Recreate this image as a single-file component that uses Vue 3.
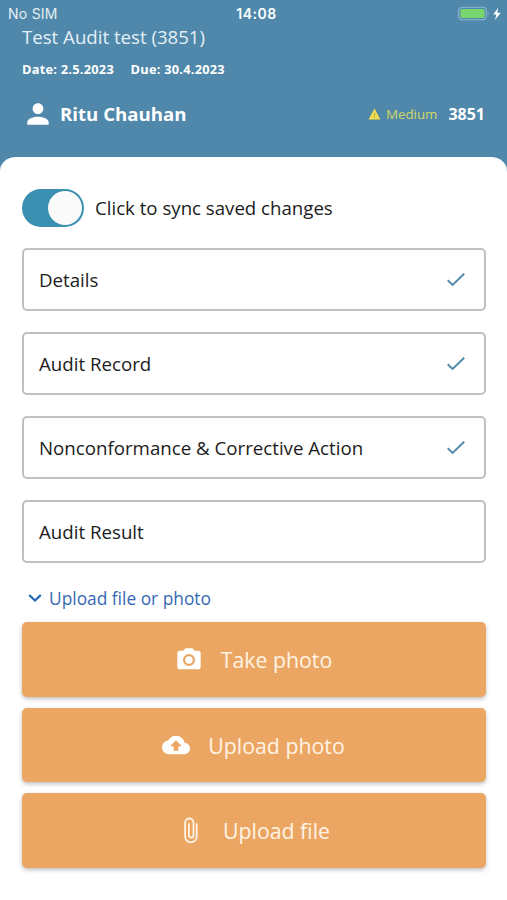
<script setup>
const sections = [
  { label: 'Details', done: true },
  { label: 'Audit Record', done: true },
  { label: 'Nonconformance & Corrective Action', done: true },
  { label: 'Audit Result', done: false },
]
</script>

<template>
  <div class="screen">
    <header class="header">
      <div class="status">
        <span class="carrier">No SIM</span>
        <span class="clock">14:08</span>
        <span class="power">
          <svg width="43" height="16" viewBox="0 0 43 16">
            <rect x="0.7" y="1.2" width="27.6" height="12.6" rx="3.6" fill="none" stroke="#8fb9d0" stroke-width="1.1" />
            <rect x="2.4" y="3" width="24.2" height="9" rx="1.6" fill="#78d66e" />
            <path d="M29.7 5.5q1.8 2 0 4z" fill="#8fb9d0" />
            <path d="M40.2 1.8L35.2 8.5h3.2L37 14L42.7 6.7h-3.5z" fill="#fff" />
          </svg>
        </span>
      </div>
      <h1 class="title">Test Audit test (3851)</h1>
      <div class="dates">
        <span>Date: 2.5.2023</span>
        <span>Due: 30.4.2023</span>
      </div>
      <div class="owner">
        <svg class="person" width="32" height="32" viewBox="0 0 24 24" fill="#fff">
          <path d="M12 12c2.210 0 4-1.790 4-4s-1.790-4-4-4-4 1.790-4 4 1.790 4 4 4zm0 2c-2.670 0-8 1.340-8 4v2h16v-2c0-2.660-5.330-4-8-4z" />
        </svg>
        <span class="name">Ritu Chauhan</span>
        <svg class="warning" width="13" height="13" viewBox="0 0 24 24">
          <path d="M1 21h22L12 1z" fill="#f0dc4e" />
          <path d="M11 9h2v5h-2zM11 16h2v2h-2z" fill="#a8a060" />
        </svg>
        <span class="level">Medium</span>
        <span class="number">3851</span>
      </div>
    </header>

    <main class="sheet">
      <div class="sync">
        <button class="toggle" aria-label="Sync saved changes"><i class="knob"></i></button>
        <span class="sync-label">Click to sync saved changes</span>
      </div>

      <div class="sections">
        <div v-for="s in sections" :key="s.label" class="section">
          <span>{{ s.label }}</span>
          <svg v-if="s.done" width="20" height="16" viewBox="0 0 20 16" fill="none" stroke="#4f88ab" stroke-width="1.9">
            <path d="M1.7 8.3L6.6 13L18.2 1.8" />
          </svg>
        </div>
      </div>

      <div class="expander">
        <svg width="14" height="10" viewBox="0 0 14 10" fill="none" stroke="#2464b4" stroke-width="2.2">
          <path d="M1.2 2L7 7.5L12.8 2" />
        </svg>
        <span>Upload file or photo</span>
      </div>

      <div class="actions">
        <button class="action">
          <svg class="camera" width="28" height="28" viewBox="0 0 24 24">
            <path fill="#fff" d="M9 2L7.170 4H4c-1.100 0-2 .9-2 2v12c0 1.100.9 2 2 2h16c1.100 0 2-.9 2-2V6c0-1.100-.9-2-2-2h-3.170L15 2z" />
            <circle cx="12" cy="12" r="4.2" fill="none" stroke="#eca663" stroke-width="1.9" />
          </svg>
          <span class="take">Take photo</span>
        </button>
        <button class="action">
          <svg class="cloud" width="28" height="28" viewBox="0 0 24 24" fill="#fff">
            <path d="M19.350 10.040C18.670 6.590 15.640 4 12 4 9.110 4 6.600 5.640 5.350 8.040 2.340 8.360 0 10.910 0 14c0 3.310 2.690 6 6 6h13c2.760 0 5-2.240 5-5 0-2.640-2.050-4.780-4.650-4.960zM14 13v4h-4v-4H7l5-5 5 5z" />
          </svg>
          <span class="photo">Upload photo</span>
        </button>
        <button class="action attach">
          <svg class="clip" width="16" height="28" viewBox="0 0 16 28" fill="none" stroke="#fff4e4" stroke-width="1.8" stroke-linecap="round">
            <path d="M13.7 8V20.5a5.8 5.8 0 0 1-11.6 0V6.7a4.2 4.2 0 0 1 8.4 0V19.2a2.3 2.3 0 0 1-4.6 0V8" />
          </svg>
          <span class="file">Upload file</span>
        </button>
      </div>
    </main>
  </div>
</template>

<style>
body {
  background: #fff;
}
</style>

<style scoped>
* {
  box-sizing: border-box;
}
.screen {
  height: 900px;
  overflow: hidden;
  display: flex;
  flex-direction: column;
  background: #4f88aa;
  font-family: "Open Sans", "Noto Sans", sans-serif;
  color: #1c1c1c;
}
.header {
  height: 157px;
  flex: none;
  color: #fff;
}
.status {
  display: grid;
  grid-template-columns: 1fr auto 1fr;
  align-items: center;
  height: 27px;
  padding: 0 6px 0 8px;
  font-family: Inter, sans-serif;
  font-size: 14px;
}
.carrier {
  font-size: 14px;
  letter-spacing: 0.25px;
  color: #e4eef4;
}
.clock {
  margin-left: 4px;
  font-weight: 600;
  font-size: 14px;
  letter-spacing: 0.5px;
}
.power {
  display: flex;
  justify-content: flex-end;
}
.title {
  margin: -1px 0 0 22px;
  font-size: 18.65px;
  line-height: 22px;
  font-weight: 400;
  color: #e4eff5;
}
.dates {
  display: flex;
  gap: 16.5px;
  margin: 12px 0 0 22px;
  font-size: 12.8px;
  letter-spacing: 0.25px;
  line-height: 18px;
  font-weight: 700;
}
.owner {
  display: flex;
  align-items: center;
  height: 32px;
  margin: 20px 22px 0;
}
.name {
  margin-left: 6px;
  padding-bottom: 2px;
  font-size: 18.65px;
  font-weight: 700;
}
.warning {
  margin-left: auto;
}
.level {
  margin-left: 5px;
  font-size: 13.3px;
  color: #d3d765;
}
.number {
  margin-left: 11px;
  font-size: 16px;
  font-weight: 700;
}
.sheet {
  flex: 1;
  padding: 32px 21px 0 22px;
  border-radius: 16px 16px 0 0 / 14px 14px 0 0;
  background: #fff;
}
.sync {
  display: flex;
  align-items: center;
  gap: 11px;
  height: 38px;
  font-size: 18.65px;
}
.sync-label {
  padding-bottom: 2px;
}
.toggle {
  display: flex;
  justify-content: flex-end;
  align-items: center;
  width: 62px;
  height: 38px;
  padding: 0 2px;
  border: 0;
  border-radius: 19px;
  background: #3b8fb1;
}
.knob {
  width: 34px;
  height: 34px;
  border-radius: 50%;
  background: #fafafa;
}
.sections {
  display: grid;
  gap: 21px;
  margin-top: 21px;
}
.section {
  display: flex;
  align-items: center;
  justify-content: space-between;
  height: 63px;
  padding: 0 18px 0 15px;
  border: 2px solid #c0c0c0;
  border-radius: 5px;
  font-size: 18.7px;
}
.expander {
  display: flex;
  align-items: center;
  gap: 7px;
  height: 24px;
  margin: 23px 0 0 6px;
  font-size: 17.35px;
  color: #3569b3;
}
.actions {
  display: grid;
  gap: 11px;
  margin-top: 12px;
}
.action {
  display: flex;
  align-items: center;
  justify-content: center;
  height: 74.6px;
  padding: 1px 1px 0 0;
  border: 0;
  border-radius: 5px;
  background: #eca663;
  box-shadow: 0 2px 4px rgba(0, 0, 0, 0.25);
  color: #fff4e4;
  font-family: inherit;
  font-size: 21.3px;
}
.attach {
  padding: 0 0 0 5px;
}
.take,
.photo {
  margin-left: 18px;
}
.file {
  margin-left: 24px;
}
</style>
